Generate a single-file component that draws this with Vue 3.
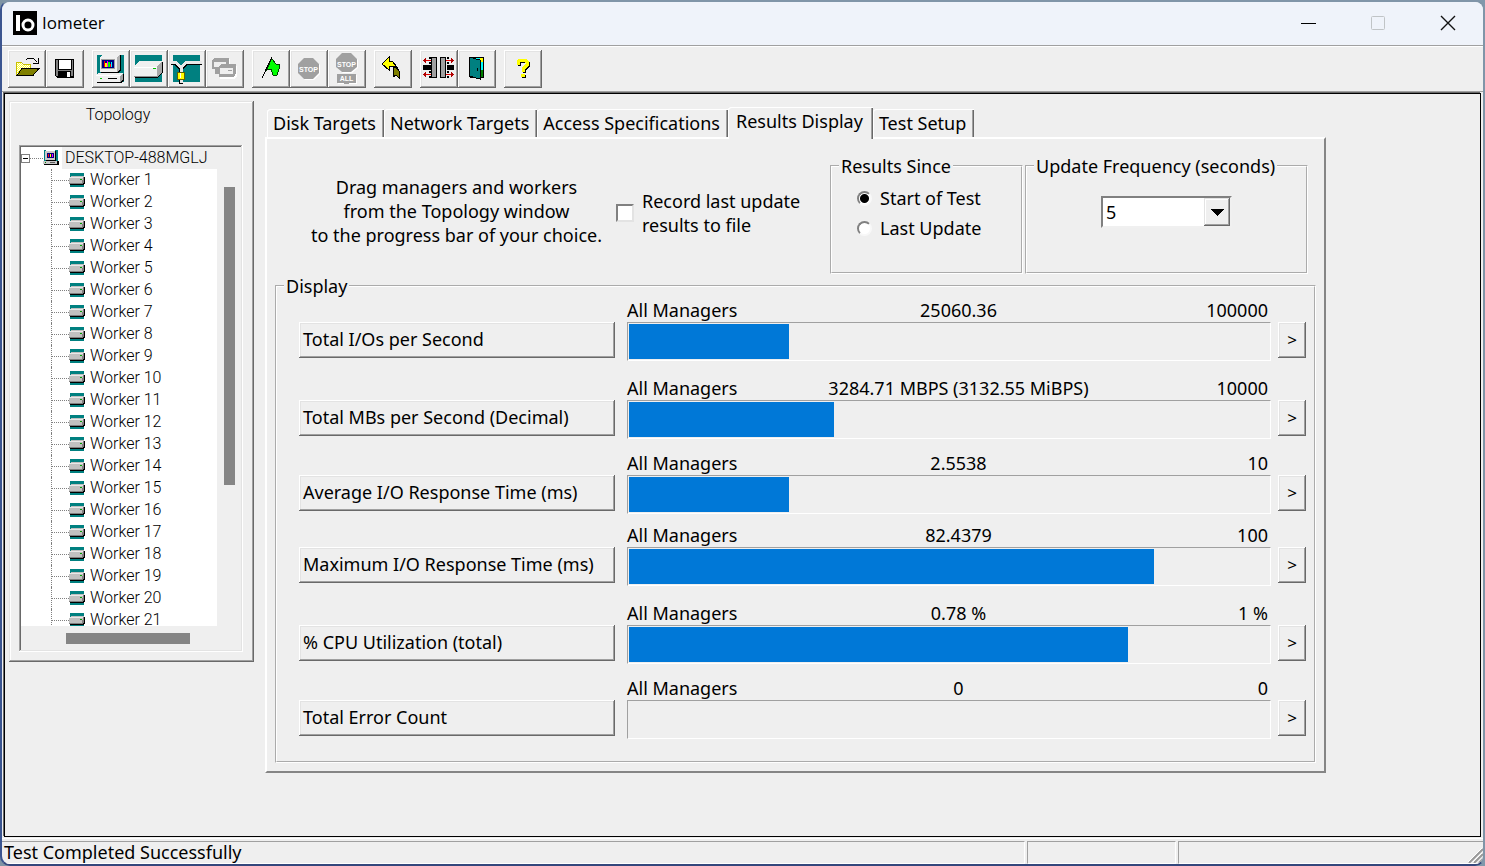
<script setup>
import { ref } from 'vue'

const workers = Array.from({ length: 21 }, (_, i) => `Worker ${i + 1}`)
const tabs = ['Disk Targets', 'Network Targets', 'Access Specifications', 'Results Display', 'Test Setup']
const active = ref('Results Display')
const since = ref('start')
const record = ref(false)
const frequency = ref('5')

const metrics = [
  { name: 'Total I/Os per Second', value: '25060.36', max: '100000', fill: 25 },
  { name: 'Total MBs per Second (Decimal)', value: '3284.71 MBPS (3132.55 MiBPS)', max: '10000', fill: 32 },
  { name: 'Average I/O Response Time (ms)', value: '2.5538', max: '10', fill: 25 },
  { name: 'Maximum I/O Response Time (ms)', value: '82.4379', max: '100', fill: 82 },
  { name: '% CPU Utilization (total)', value: '0.78 %', max: '1 %', fill: 78 },
  { name: 'Total Error Count', value: '0', max: '0', fill: 0 }
]
</script>

<template>
  <div class="window">
    <header class="titlebar">
      <svg class="logo" viewBox="0 0 24 24" aria-hidden="true">
        <rect width="24" height="24" fill="#000" />
        <rect x="3" y="4" width="4" height="16" fill="#fff" />
        <ellipse cx="15" cy="14" rx="5" ry="5" fill="none" stroke="#fff" stroke-width="3" />
      </svg>
      <h1>Iometer</h1>
      <div class="controls">
        <button type="button" aria-label="Minimize"><svg viewBox="0 0 16 16"><path d="M1 8.500h15" stroke="#000" /></svg></button>
        <button type="button" aria-label="Maximize" disabled><svg viewBox="0 0 16 16"><rect x="1.500" y="1.500" width="13" height="13" rx="1" fill="none" stroke="#c0c4c6" /></svg></button>
        <button type="button" aria-label="Close"><svg viewBox="0 0 16 16"><path d="M1 1l14 14M15 1L1 15" stroke="#111" stroke-width="1.400" /></svg></button>
      </div>
    </header>

    <nav class="toolbar" aria-label="Toolbar">
      <div class="tools">
        <button type="button" aria-label="Open">
          <svg viewBox="0 0 38 38" shape-rendering="crispEdges">
            <defs><pattern id="dots" width="2" height="2" patternUnits="userSpaceOnUse"><rect width="2" height="2" fill="#ffff30" /><rect width="1" height="1" fill="#fff" /><rect x="1" y="1" width="1" height="1" fill="#fff" /></pattern></defs>
            <path d="M8 25V14l1-2h4l2 2h7v4h-7l-6 7z" fill="url(#dots)" stroke="#c8c000" />
            <path d="M14 18.500h17l-6 7H9z" fill="#808000" stroke="#000" />
            <path d="M18 10l2-2h5l4 4M30.500 8v5H25" fill="none" stroke="#000" />
          </svg>
        </button>
        <button type="button" aria-label="Save">
          <svg viewBox="0 0 38 38" shape-rendering="crispEdges">
            <path d="M9 9h19v19H11l-2-2z" fill="#000" />
            <rect x="10" y="10" width="17" height="16" fill="#808080" />
            <rect x="12" y="9" width="13" height="10" fill="#fff" stroke="#000" />
            <rect x="12" y="21" width="13" height="7" fill="#000" />
            <rect x="21" y="22" width="3" height="5" fill="#fff" />
          </svg>
        </button>
      </div>

      <div class="tools">
        <button type="button" aria-label="Start a new manager">
          <svg viewBox="0 0 38 38" shape-rendering="crispEdges">
            <rect x="5" y="5" width="27" height="27" fill="#008080" />
            <path d="M8 7l3-3h17v15l-3 3H8z" fill="#f0f0f0" />
            <path d="M25 7l3-3v15l-3 3z" fill="#b0b0b0" />
            <path d="M28 5h1v15l-3 3H9v-1h16l3-3z" fill="#000" />
            <rect x="9" y="9" width="14" height="10" fill="#a0a0a0" />
            <rect x="10" y="10" width="12" height="8" fill="#000080" />
            <path d="M12 11h1v6h-1z" fill="#f00" /><path d="M13 13h2v4h-2z" fill="#ff0" />
            <path d="M15 11h1v6h-1z" fill="#f0f" /><path d="M16 12h2v5h-2z" fill="#0f0" />
            <path d="M18 14h1v3h-1z" fill="#f00" /><path d="M19 12h1v5h-1z" fill="#0ff" />
            <path d="M4 25l3-2h24v6l-3 3H4z" fill="#f0f0f0" />
            <path d="M28 26l3-3v6l-3 3z" fill="#a0a0a0" />
            <path d="M4 25h24v1H4z" fill="#fff" />
            <path d="M5 32h23l3-3v-5h1v6l-3 3H5z" fill="#000" />
            <rect x="8" y="28" width="2" height="1" fill="#00c000" /><rect x="16" y="28" width="9" height="1" fill="#000" />
          </svg>
        </button>
        <button type="button" aria-label="Start disk worker">
          <svg viewBox="0 0 38 38" shape-rendering="crispEdges">
            <rect x="5" y="5" width="27" height="27" fill="#008080" />
            <path d="M4 17l5-6h23v11l-5 5H4z" fill="#f0f0f0" />
            <path d="M27 17l5-6v11l-5 5z" fill="#a8a8a8" />
            <path d="M4 17h23v1H4z" fill="#fff" />
            <path d="M4 26h23v1H4z" fill="#909090" />
            <path d="M5 27h22l5-5V12h1v10l-5 6H5z" fill="#000" />
            <rect x="23" y="18" width="3" height="1" fill="#00c000" />
          </svg>
        </button>
        <button type="button" aria-label="Start network worker">
          <svg viewBox="0 0 38 38" shape-rendering="crispEdges">
            <rect x="5" y="5" width="27" height="27" fill="#008080" />
            <path d="M3 13h5l5 6v15M34 13H19l-6 6" fill="none" stroke="#000" stroke-width="4" />
            <path d="M3 12.500h5l5 5v4M34 12.500H18l-5 5M13 28v5" fill="none" stroke="#e8e8e8" stroke-width="3" />
            <rect x="9" y="22" width="7" height="7" fill="#ff0" stroke="#606000" />
            <path d="M12.500 23v5" stroke="#fff" />
          </svg>
        </button>
        <button type="button" aria-label="Copy worker" disabled>
          <svg viewBox="0 0 38 38" shape-rendering="crispEdges">
            <path d="M8 9h15l1 1v9H8z" fill="#fff" />
            <path d="M6 10l2-2h15v9l-2 2H6z" fill="#a0a0a0" /><rect x="8" y="12" width="12" height="5" fill="#efefef" /><path d="M15 14h4" stroke="#a0a0a0" />
            <path d="M9 19h4v5H9z" fill="#a0a0a0" />
            <path d="M14 16h16l1 1v9l-2 3H14z" fill="#fff" />
            <path d="M13 16l2-2h15v9l-2 4H13z" fill="#a0a0a0" /><rect x="14" y="18" width="13" height="6" fill="#efefef" /><path d="M22 20.500h4" stroke="#a0a0a0" />
          </svg>
        </button>
      </div>

      <div class="tools">
        <button type="button" aria-label="Start tests">
          <svg viewBox="0 0 38 38" shape-rendering="crispEdges">
            <path d="M19 9l2 1 3 4h3l1 2-3 9-2 1-2-1-2-6-4 1z" fill="#0f0" stroke="#004000" />
            <path d="M20 7L10 28" stroke="#000" />
          </svg>
        </button>
        <button type="button" aria-label="Stop test" disabled>
          <svg viewBox="0 0 38 38">
            <path d="M15 9h9l6 6v9l-6 6h-9l-6-6v-9z" fill="#fff" />
            <path d="M14 8h9l6 6v9l-6 6h-9l-6-6v-9z" fill="#a0a0a0" />
            <text x="18.500" y="22" class="sign">STOP</text>
          </svg>
        </button>
        <button type="button" aria-label="Stop all tests" disabled>
          <svg viewBox="0 0 38 38">
            <path d="M15 4h9l6 6v8l-6 5h-9l-6-5v-8z" fill="#fff" />
            <path d="M14 3h9l6 6v8l-6 5h-9l-6-5V9z" fill="#a0a0a0" />
            <rect x="10" y="25" width="19" height="9" fill="#fff" />
            <rect x="9" y="24" width="19" height="9" fill="#a0a0a0" />
            <path d="M16 33h5v1h-5z" fill="#a0a0a0" />
            <text x="18.500" y="17" class="sign">STOP</text>
            <text x="18.500" y="31" class="sign">ALL</text>
          </svg>
        </button>
      </div>

      <div class="tools">
        <button type="button" aria-label="Reset workers">
          <svg viewBox="0 0 38 38" shape-rendering="crispEdges">
            <path d="M19 17h3l3 4v7l-3-3-3 2v-7z" fill="#808000" stroke="#000" />
            <path d="M8 14l7-7v4h3l5 6-4-1h-4v4z" fill="#ff0" stroke="#000" />
          </svg>
        </button>
      </div>

      <div class="tools">
        <button type="button" aria-label="Assign targets">
          <svg viewBox="0 0 38 38" shape-rendering="crispEdges">
            <path d="M3 15h8v5H3zM27 15h7v5h-7z" fill="#000" />
            <path d="M9 7h2v2H9zM9 12h2v2H9zM9 21h2v2H9zM9 26h2v2H9zM27 7h2v2h-2zM27 12h2v2h-2zM27 21h2v2h-2zM27 26h2v2h-2z" fill="#000" />
            <path d="M11 7h6v21h-6zM20 7h6v21h-6z" fill="#000" />
            <path d="M12 8h4v19h-4zM21 8h4v19h-4z" fill="#a0a0a0" />
            <path d="M4 10h7v1H4zM4 24h7v1H4zM26 10h7v1h-7zM26 24h7v1h-7z" fill="#e00000" />
            <path d="M3 10.500l3-3v6zM3 24.500l3-3v6zM34 10.500l-3-3v6zM34 24.500l-3-3v6z" fill="#b00000" />
          </svg>
        </button>
        <button type="button" aria-label="Exit">
          <svg viewBox="0 0 38 38" shape-rendering="crispEdges">
            <rect x="12" y="7" width="13" height="20" fill="#0ff" stroke="#000" />
            <path d="M22 8h3v4h-3z" fill="#ff0" /><path d="M22 20h3v7h-3z" fill="#008000" />
            <path d="M11 7l11 3v19l-11-3z" fill="#008080" stroke="#000" />
            <rect x="19" y="18" width="1" height="3" fill="#000" />
          </svg>
        </button>
      </div>

      <div class="tools">
        <button type="button" aria-label="About">
          <svg viewBox="0 0 38 38" shape-rendering="crispEdges">
            <path d="M15 16v-3l2-2h4l3 2v3l-4 4v3M18 26h4" fill="none" stroke="#000" stroke-width="3" />
            <path d="M14 15v-3l2-2h5l2 2v3l-4 4v3" fill="none" stroke="#ff0" stroke-width="3" />
            <rect x="17" y="24" width="4" height="3" fill="#ff0" />
          </svg>
        </button>
      </div>
    </nav>

    <main class="client">
      <aside class="topology">
        <h2>Topology</h2>
        <div class="tree">
          <div class="view">
            <div class="host">
              <button type="button" class="expander" aria-label="Collapse DESKTOP-488MGLJ"></button>
              <span class="link"></span>
              <svg class="node" viewBox="0 0 17 16" shape-rendering="crispEdges" aria-hidden="true">
                <rect x="1" y="0" width="14" height="14" fill="#008080" />
                <path d="M2 1l1-1h9v10H2z" fill="#c8c8c8" /><path d="M3 0h9v1H3z" fill="#fff" />
                <path d="M12 1h1v9l-1 1H3v-1h9z" fill="#000" />
                <rect x="4" y="3" width="7" height="5" fill="#000080" />
                <path d="M5 4h1v3H5z" fill="#f00" /><path d="M7 4h1v3H7z" fill="#ff0" /><path d="M9 4h1v3H9z" fill="#f0f" />
                <path d="M0 11h14v3H0z" fill="#c8c8c8" /><path d="M1 14h13v-3h2v3l-1 1H1z" fill="#000" />
                <path d="M2 12h1v1H2z" fill="#008000" /><path d="M7 12h5v1H7z" fill="#606060" />
              </svg>
              <span class="hostname">DESKTOP-488MGLJ</span>
            </div>
            <ul>
              <li v-for="w in workers" :key="w">
                <svg class="node" viewBox="0 0 17 16" shape-rendering="crispEdges" aria-hidden="true">
                  <rect x="1" y="1" width="14" height="14" fill="#008080" />
                  <path d="M0 6l2-2h13v6l-2 2H0z" fill="#c0c0c0" />
                  <path d="M1 5h13v1H1z" fill="#e8e8e8" />
                  <path d="M0 11h13l1-6h1v6l-1 1H0z" fill="#808080" />
                  <path d="M1 12h13l1-2V5h1v6l-2 2H1z" fill="#000" />
                  <rect x="11" y="7" width="2" height="1" fill="#00a000" />
                </svg>
                <span>{{ w }}</span>
              </li>
            </ul>
          </div>
          <div class="vbar"><span></span></div>
          <div class="hbar"><span></span></div>
        </div>
      </aside>

      <section class="sheet">
        <div class="tabs" role="tablist">
          <button v-for="t in tabs" :key="t" type="button" role="tab" :aria-selected="t === active"
            :class="{ active: t === active }" @click="active = t">{{ t }}</button>
        </div>

        <div class="page" role="tabpanel">
          <div class="options">
            <p>Drag managers and workers<br />from the Topology window<br />to the progress bar of your choice.</p>
            <label class="record">
              <input v-model="record" type="checkbox" />
              <span>Record last update<br />results to file</span>
            </label>
            <fieldset class="since">
              <legend>Results Since</legend>
              <label><input v-model="since" type="radio" name="since" value="start" /><span>Start of Test</span></label>
              <label><input v-model="since" type="radio" name="since" value="last" /><span>Last Update</span></label>
            </fieldset>
            <fieldset class="frequency">
              <legend id="freq">Update Frequency (seconds)</legend>
              <div class="combo">
                <select v-model="frequency" aria-labelledby="freq">
                  <option>5</option>
                  <option>10</option>
                </select>
                <span class="arrow"><svg viewBox="0 0 14 7" shape-rendering="crispEdges"><path d="M0 0h14L7 7z" /></svg></span>
              </div>
            </fieldset>
          </div>

          <fieldset class="display">
            <legend>Display</legend>
            <div v-for="m in metrics" :key="m.name" class="metric">
              <button type="button" class="name">{{ m.name }}</button>
              <div class="reading">
                <div class="figures">
                  <span>All Managers</span>
                  <span>{{ m.value }}</span>
                  <span>{{ m.max }}</span>
                </div>
                <div class="bar"><div :style="{ width: m.fill + '%' }"></div></div>
              </div>
              <button type="button" class="more" :aria-label="'Details for ' + m.name">&gt;</button>
            </div>
          </fieldset>
        </div>
      </section>
    </main>

    <footer class="status">
      <span>Test Completed Successfully</span>
      <span></span>
      <span>
        <svg viewBox="0 0 15 15" aria-hidden="true"><path d="M1 15L15 1M6 15l9-9M11 15l4-4" stroke="#999" stroke-width="2" /><path d="M0 14L14 0M5 14l9-9" stroke="#fff" /></svg>
      </span>
    </footer>
  </div>
</template>

<style>
body {
  background: linear-gradient(90deg, #7f95a5, #8198ab);
}
</style>

<style scoped>
* {
  box-sizing: border-box;
}

.window {
  display: flex;
  flex-direction: column;
  height: 100vh;
  border: 2px solid #8095a8;
  border-left-color: #3b5590;
  border-bottom-color: #34477c;
  border-radius: 10px;
  overflow: hidden;
  background: #efefef;
  color: #000;
  font: 18px/24px "Noto Sans", "Open Sans", sans-serif;
}

button {
  font: inherit;
  color: inherit;
  padding: 0;
  margin: 0;
}

.titlebar {
  display: flex;
  align-items: center;
  flex: none;
  height: 44px;
  padding: 0 0 2px 11px;
  background: #eff3fa;
  border-bottom: 1px solid #a0a0a0;
}

.logo {
  width: 24px;
  height: 24px;
}

h1 {
  flex: 1;
  margin: 0 0 0 5px;
  font: 400 17px/24px "Open Sans", sans-serif;
}

.controls {
  display: flex;
}

.controls button {
  display: grid;
  place-items: center;
  width: 70px;
  height: 40px;
  border: 0;
  background: none;
}

.controls svg {
  width: 16px;
  height: 16px;
}

.toolbar {
  display: flex;
  flex: none;
  gap: 8px;
  padding: 3px 6px;
  border-top: 1px solid #fff;
  border-bottom: 1px solid #a0a0a0;
}

.tools {
  display: flex;
}

.tools button {
  width: 38px;
  height: 38px;
  border: 0;
  background: none;
  box-shadow: inset -1px -1px #696969, inset 1px 1px #fff, inset -2px -2px #a0a0a0, inset 2px 2px #e3e3e3;
}

.tools svg {
  display: block;
  width: 38px;
  height: 38px;
}

.sign {
  fill: #fff;
  font: 700 7px "Liberation Sans", sans-serif;
  text-anchor: middle;
}

.client {
  display: flex;
  flex: 1;
  min-height: 0;
  margin: 1px 2px 0;
  padding: 7px 154px 0 4px;
  gap: 11px;
  border: 1px solid #000;
  box-shadow: -1px -1px #696969;
}

.topology {
  flex: none;
  align-self: flex-start;
  width: 245px;
  padding: 3px 11px 10px 10px;
  box-shadow: inset -1px -1px #696969, inset 1px 1px #e3e3e3, inset -2px -2px #a0a0a0, inset 2px 2px #fff;
  font: 300 16px/22px Roboto, sans-serif;
}

h2 {
  margin: 0 0 19px;
  padding-right: 26px;
  font: inherit;
  text-align: center;
}

.tree {
  display: grid;
  grid-template-columns: 1fr 24px;
  grid-template-rows: 479px 24px;
  padding: 2px 2px 2px 2px;
  box-shadow: inset -1px -1px #fff, inset 1px 1px #a0a0a0, inset -2px -2px #e3e3e3, inset 2px 2px #696969;
}

.view {
  overflow: hidden;
  background: #fff;
}

.host {
  display: flex;
  align-items: center;
  height: 22px;
}

.expander {
  width: 9px;
  height: 9px;
  border: 1px solid #808080;
  background: linear-gradient(#000, #000) center / 5px 1px no-repeat #fff;
}

.link {
  width: 13px;
  border-top: 1px dotted #808080;
}

.node {
  flex: none;
  width: 17px;
  height: 16px;
}

.hostname {
  flex: 1;
  margin-left: 2px;
  padding-left: 3px;
  background: #efefef;
  white-space: nowrap;
}

ul {
  margin: 0 0 0 30px;
  padding: 0;
  list-style: none;
}

li {
  display: flex;
  align-items: center;
  gap: 4px;
  height: 22px;
  border-left: 1px dotted #808080;
}

li::before {
  content: "";
  width: 17px;
  margin-right: -4px;
  border-top: 1px dotted #808080;
}

.vbar {
  padding: 40px 6px 0 7px;
}

.vbar span {
  display: block;
  height: 298px;
  background: #858585;
}

.hbar {
  padding: 7px 27px 0 45px;
}

.hbar span {
  display: block;
  height: 11px;
  background: #858585;
}

.sheet {
  flex: 1;
  min-width: 0;
  padding-top: 6px;
}

.tabs {
  display: flex;
  align-items: flex-end;
  height: 30px;
  padding-left: 2px;
}

.tabs button {
  height: 28px;
  padding: 0 8px 0 6px;
  border: 0;
  border-radius: 3px 0 0 0;
  background: #efefef;
  box-shadow: inset 1px 1px #fff, inset -1px 0 #696969, inset -2px 0 #a0a0a0;
  white-space: nowrap;
}

.tabs .active {
  z-index: 1;
  height: 32px;
  margin-bottom: -2px;
  padding: 0 10px 4px 8px;
}

.page {
  padding: 15px 8px 8px 8px;
  border: 2px solid;
  border-color: #fff #858585 #858585 #fff;
}

.options {
  display: flex;
  padding: 0 8px 0 22px;
}

.options p {
  flex: 1;
  margin: 21px 0 0;
  text-align: center;
  white-space: nowrap;
}

label {
  display: flex;
  align-items: center;
}

.record {
  align-self: flex-start;
  gap: 8px;
  width: 214px;
  margin-top: 35px;
}

input {
  appearance: none;
  flex: none;
  margin: 0;
  background: #fff;
}

input[type="checkbox"] {
  width: 18px;
  height: 18px;
  border: 2px solid;
  border-color: #808080 #e3e3e3 #e3e3e3 #808080;
}

input[type="checkbox"]:checked {
  background: radial-gradient(#000 4px, #fff 5px);
}

input[type="radio"] {
  width: 15px;
  height: 15px;
  border: 2px solid;
  border-color: #808080 #f8f8f8 #f8f8f8 #808080;
  border-radius: 50%;
}

input[type="radio"]:checked {
  background: radial-gradient(#000 4px, #fff 5px);
}

fieldset {
  min-width: 0;
  margin: 0;
  padding: 0;
  border: 2px groove #fff;
}

legend {
  margin-left: 7px;
  padding: 0 2px;
}

.since {
  width: 193px;
  height: 120px;
  margin-right: 2px;
}

.since label {
  gap: 8px;
  margin: 8px 0 0 25px;
  height: 24px;
}

.since label + label {
  margin-top: 6px;
}

.frequency {
  width: 283px;
}

.combo {
  position: relative;
  width: 131px;
  margin: 18px auto 0;
}

select {
  appearance: none;
  display: block;
  width: 100%;
  height: 32px;
  padding: 0 3px;
  border: 2px solid;
  border-color: #808080 #f0f0f0 #f0f0f0 #808080;
  border-radius: 0;
  background: #fff;
  color: #000;
  font: inherit;
}

.arrow {
  position: absolute;
  top: 2px;
  right: 2px;
  bottom: 2px;
  display: grid;
  place-items: center;
  width: 26px;
  background: #efefef;
  box-shadow: inset -1px -1px #696969, inset 1px 1px #e3e3e3, inset -2px -2px #a0a0a0, inset 2px 2px #fff;
  pointer-events: none;
}

.arrow svg {
  width: 14px;
  height: 7px;
}

.display {
  padding: 0 8px 22px 22px;
}

.display legend {
  margin-left: -15px;
}

.metric {
  display: flex;
  align-items: flex-start;
  margin-bottom: 15px;
}

.metric:nth-of-type(3n + 2) {
  margin-bottom: 12px;
}

.metric:nth-of-type(3n) {
  margin-bottom: 9px;
}

.metric:last-child {
  margin-bottom: 0;
}

.name,
.more {
  flex: none;
  height: 36px;
  margin-top: 24px;
  border: 0;
  background: #efefef;
  box-shadow: inset -1px -1px #696969, inset 1px 1px #fff, inset -2px -2px #a0a0a0, inset 2px 2px #e3e3e3;
}

.name {
  width: 316px;
  padding: 0 4px 2px;
  text-align: left;
}

.more {
  width: 28px;
  font-size: 17px;
}

.reading {
  flex: 1;
  margin: 0 7px 0 12px;
}

.figures {
  display: grid;
  grid-template-columns: 114px 1fr 92px;
  padding-right: 3px;
  text-align: center;
  white-space: nowrap;
}

.figures span:first-child {
  text-align: left;
}

.figures span:last-child {
  text-align: right;
}

.bar {
  height: 39px;
  padding: 1px;
  border: 1px solid;
  border-color: #a0a0a0 #fff #fff #a0a0a0;
}

.bar div {
  height: 100%;
  background: #0078d7;
}

.status {
  display: flex;
  flex: none;
  gap: 2px;
  margin-top: 1px;
  padding-top: 2px;
  border-top: 1px solid #fff;
}

.status span {
  flex: none;
  width: 149px;
  height: 23px;
  padding-left: 1px;
  border: 1px solid;
  border-color: #a0a0a0 #fff #fff #a0a0a0;
}

.status span:first-child {
  flex: 1;
  padding-left: 2px;
  border-left: 0;
  line-height: 21px;
}

.status span:last-child {
  display: flex;
  align-items: flex-end;
  justify-content: flex-end;
  width: 305px;
  border-right: 0;
}

.status svg {
  width: 15px;
  height: 15px;
}
</style>
